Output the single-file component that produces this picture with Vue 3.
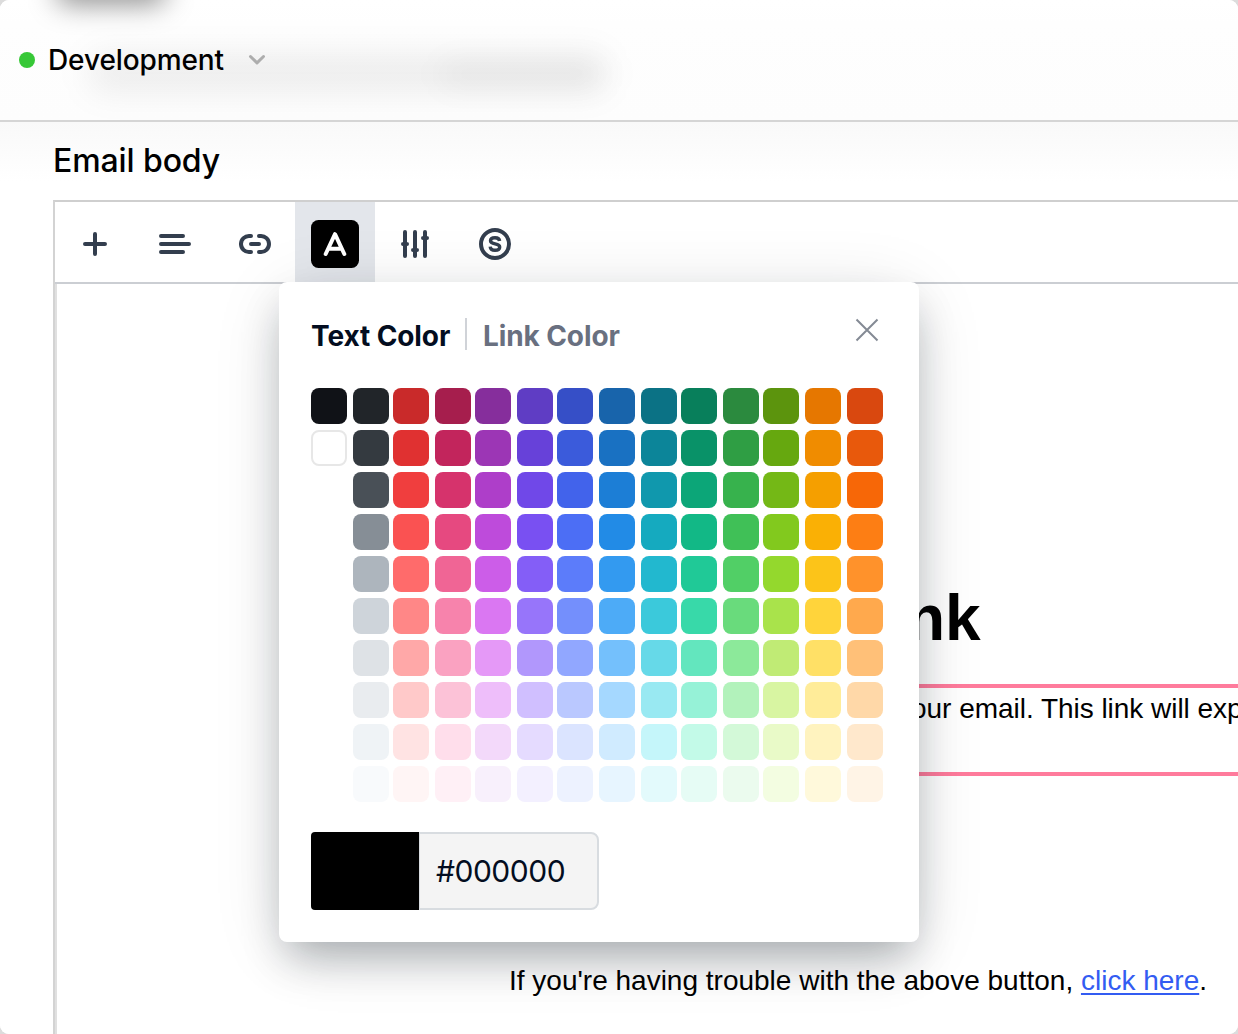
<script setup>
import { ref } from 'vue'

const palette = [
  ['#101217', '#ffffff'],
  ['#212529', '#343a40', '#495057', '#868e96', '#adb5bd', '#ced4da', '#dee2e6', '#e9ecef', '#eff3f6', '#f8fafc'],
  ['#c92a2a', '#e03131', '#f03e3e', '#fa5252', '#ff6b6b', '#ff8787', '#ffa8a8', '#ffc9c9', '#ffe3e3', '#fff5f5'],
  ['#a61e4d', '#c2255c', '#d6336c', '#e64980', '#f06595', '#f783ac', '#faa2c1', '#fcc2d7', '#ffdeeb', '#fff0f6'],
  ['#862e9c', '#9c36b5', '#ae3ec9', '#be4bdb', '#cc5de8', '#da77f2', '#e599f7', '#eebefa', '#f3d9fa', '#f8f0fc'],
  ['#5f3dc4', '#6741d9', '#7048e8', '#7950f2', '#845ef7', '#9775fa', '#b197fc', '#d0bfff', '#e5dbff', '#f3f0ff'],
  ['#364fc7', '#3b5bdb', '#4263eb', '#4c6ef5', '#5c7cfa', '#748ffc', '#91a7ff', '#bac8ff', '#dbe4ff', '#edf2ff'],
  ['#1864ab', '#1971c2', '#1c7ed6', '#228be6', '#339af0', '#4dabf7', '#74c0fc', '#a5d8ff', '#d0ebff', '#e7f5ff'],
  ['#0b7285', '#0c8599', '#1098ad', '#15aabf', '#22b8cf', '#3bc9db', '#66d9e8', '#99e9f2', '#c5f6fa', '#e3fafc'],
  ['#087f5b', '#099268', '#0ca678', '#12b886', '#20c997', '#38d9a9', '#63e6be', '#96f2d7', '#c3fae8', '#e6fcf5'],
  ['#2b8a3e', '#2f9e44', '#37b24d', '#40c057', '#51cf66', '#69db7c', '#8ce99a', '#b2f2bb', '#d3f9d8', '#ebfbee'],
  ['#5c940d', '#66a80f', '#74b816', '#82c91e', '#94d82d', '#a9e34b', '#c0eb75', '#d8f5a2', '#e9fac8', '#f3fde1'],
  ['#e67700', '#f08c00', '#f59f00', '#fab005', '#fcc419', '#ffd43b', '#ffe066', '#ffec99', '#fff3bf', '#fff9db'],
  ['#d9480f', '#e8590c', '#f76707', '#fd7e14', '#ff922b', '#ffa94d', '#ffc078', '#ffd8a8', '#ffe8cc', '#fff4e6'],
]
const selected = ref('#000000')
</script>

<template>
  <div class="backdrop">
    <div class="page">
      <header class="topbar">
        <span class="haze haze-title"></span>
        <span class="haze haze-line"></span>
        <span class="haze haze-line-end"></span>
        <span class="dot"></span>
        <span class="env">Development</span>
        <svg class="chevron" width="18" height="12" viewBox="0 0 18 12"><path d="M2.500 2.500 9 8.800 15.500 2.500" /></svg>
      </header>

      <main class="content">
        <h2 class="label">Email body</h2>
        <section class="editor">
          <div class="toolbar">
            <button class="tool">
              <svg viewBox="0 0 80 80"><path d="M40 32v20M30 42h20" /></svg>
            </button>
            <button class="tool">
              <svg viewBox="0 0 80 80"><path d="M26 34h22M26 42h28M26 50h22" /></svg>
            </button>
            <button class="tool">
              <svg viewBox="0 0 80 80"><path d="M36 34H34.500a8 8 0 0 0-8.500 8 8 8 0 0 0 8.500 8H36M44 34h1.500a8 8 0 0 1 8.500 8 8 8 0 0 1-8.500 8H44M36 42h8" /></svg>
            </button>
            <button class="tool active">
              <svg viewBox="0 0 80 80">
                <rect x="16" y="18" width="48" height="48" rx="7.500" />
                <path class="letter" d="M30.700 52 40 32.200 49.300 52M34 46.800h12" />
              </svg>
            </button>
            <button class="tool">
              <svg viewBox="0 0 80 80"><path d="M30 30v24M40 30v24M50 30v24M28 42h4M38 48h4M48 36h4" /></svg>
            </button>
            <button class="tool">
              <svg viewBox="0 0 80 80">
                <circle cx="40" cy="42" r="14" />
                <path class="ess" d="M44.600 39C44.400 36.600 42.600 35.700 40 35.700c-2.600 0-4.500 1.100-4.500 3.100 0 4.500 9.200 1.800 9.200 6.200 0 2-1.900 3.300-4.700 3.300S35.400 47 35.200 44.600" />
              </svg>
            </button>
          </div>

          <div class="mail">
            <h1 class="title">nk</h1>
            <p class="block">our email. This link will exp</p>
            <p class="help">If you're having trouble with the above button, <a>click here</a>.</p>
          </div>
        </section>
      </main>

      <div class="popover">
        <div class="tabs">
          <span class="tab current">Text Color</span>
          <span class="divider"></span>
          <span class="tab">Link Color</span>
          <svg class="close" width="24" height="24" viewBox="0 0 24 24"><path d="M1.500 1.500l21 21M22.500 1.500l-21 21" /></svg>
        </div>
        <div class="swatches">
          <div v-for="(column, i) in palette" :key="i" class="column">
            <span
              v-for="color in column"
              :key="color"
              class="swatch"
              :class="{ white: color === '#ffffff' }"
              :style="{ background: color }"
            ></span>
          </div>
        </div>
        <div class="value">
          <span class="preview" :style="{ background: selected }"></span>
          <span class="hex"><span>{{ selected }}</span></span>
        </div>
      </div>
    </div>
  </div>
</template>

<style>
body {
  margin: 0;
}
</style>

<style scoped>
.backdrop {
  width: 1238px;
  height: 1034px;
  background: #dcdcdc;
  overflow: hidden;
}
.page {
  position: relative;
  width: 1238px;
  height: 1034px;
  border-radius: 9px;
  background: #fff;
  overflow: hidden;
  font-family: Inter, 'Liberation Sans', sans-serif;
  color: #000;
}
.topbar {
  position: relative;
  box-sizing: border-box;
  height: 122px;
  padding-left: 19px;
  display: flex;
  align-items: center;
  border-bottom: 2px solid #d5d5d5;
  background: linear-gradient(#fff, #fefefe 20%, #fdfdfd);
  overflow: hidden;
}
.haze {
  position: absolute;
  border-radius: 12px;
}
.haze-title {
  left: 56px;
  top: -28px;
  width: 110px;
  height: 32px;
  background: rgba(0, 0, 0, 0.45);
  filter: blur(14px);
}
.haze-line {
  left: 90px;
  top: 55px;
  width: 515px;
  height: 36px;
  background: rgba(0, 0, 0, 0.07);
  filter: blur(16px);
}
.haze-line-end {
  left: 440px;
  top: 59px;
  width: 165px;
  height: 30px;
  background: rgba(0, 0, 0, 0.03);
  filter: blur(14px);
}
.dot {
  position: relative;
  width: 16px;
  height: 16px;
  border-radius: 50%;
  background: #37c837;
}
.env {
  position: relative;
  width: 177px;
  margin-left: 13px;
  font-size: 28px;
  font-weight: 500;
  line-height: 36px;
  letter-spacing: -0.1px;
  white-space: nowrap;
}
.chevron {
  position: relative;
  margin-left: 23px;
}
.chevron path {
  fill: none;
  stroke: #adadad;
  stroke-width: 3;
  stroke-linecap: round;
  stroke-linejoin: round;
}
.content {
  height: 912px;
  padding-left: 53px;
  background: linear-gradient(#f9f9f9, #fff 60px);
}
.label {
  margin: 0;
  padding-top: 19px;
  height: 59px;
  font-size: 32px;
  font-weight: 500;
  line-height: 40px;
  letter-spacing: -0.1px;
}
.editor {
  height: 840px;
  border-top: 2px solid #cfcfcf;
  border-left: 2px solid #d3d3d3;
}
.toolbar {
  display: flex;
  height: 80px;
  border-bottom: 2px solid #cbced3;
}
.tool {
  width: 80px;
  height: 80px;
  padding: 0;
  border: 0;
  background: transparent;
}
.tool.active {
  background: #e3e6eb;
}
.tool svg {
  display: block;
  width: 80px;
  height: 80px;
  fill: none;
  stroke: #333e4e;
  stroke-width: 4;
  stroke-linecap: round;
  stroke-linejoin: round;
}
.tool rect {
  fill: #000;
  stroke: none;
}
.tool .letter {
  stroke: #fff;
}
.tool .ess {
  stroke-width: 3.400;
  stroke-linecap: butt;
}
.mail {
  height: 760px;
  border-left: 2px solid #e0e0e0;
  font-family: 'Liberation Sans', Arial, sans-serif;
}
.title {
  margin: 0;
  padding: 298px 0 0 849px;
  height: 102px;
  font-size: 64px;
  line-height: 72px;
}
.block {
  box-sizing: border-box;
  height: 92px;
  margin: 0 0 0 452px;
  padding: 5px 0 0 402px;
  border-top: 4px solid #ff7b9c;
  border-bottom: 4px solid #ff7b9c;
  font-size: 28px;
  line-height: 32px;
  letter-spacing: -0.03px;
  white-space: nowrap;
}
.help {
  margin: 0;
  padding: 189px 0 0 452px;
  font-size: 28px;
  line-height: 32px;
  white-space: nowrap;
}
.help a {
  color: #335cf2;
  text-decoration: underline;
  text-decoration-thickness: 2px;
  text-underline-offset: 3px;
}
.popover {
  position: absolute;
  left: 279px;
  top: 282px;
  box-sizing: border-box;
  width: 640px;
  height: 660px;
  padding: 32px;
  border-radius: 8px;
  background: #fff;
  box-shadow:
    0 22px 40px -8px rgba(14, 22, 32, 0.3),
    0 10px 70px -10px rgba(14, 22, 32, 0.16);
}
.tabs {
  display: flex;
  align-items: center;
  height: 40px;
  font-size: 28px;
  font-weight: 700;
  letter-spacing: -0.1px;
  color: #697080;
}
.tab {
  line-height: 40px;
  padding-top: 4px;
  white-space: nowrap;
}
.tab.current {
  width: 140px;
  color: #030d20;
}
.divider {
  width: 2px;
  height: 32px;
  margin: 0 16px 0 14px;
  background: #d0d3d8;
}
.close {
  margin: -8px 8px 0 auto;
}
.close path {
  fill: none;
  stroke: #848a94;
  stroke-width: 2;
}
.swatches {
  display: grid;
  grid-template-columns: 42px 40px 42px 40px 42px 40px 42px 42px 40px 42px 40px 42px 42px 36px;
  margin-top: 34px;
  height: 444px;
}
.column {
  display: flex;
  flex-direction: column;
  gap: 6px;
}
.swatch {
  box-sizing: border-box;
  width: 36px;
  height: 36px;
  border-radius: 8px;
}
.swatch.white {
  border: 2px solid #e7e7e7;
}
.value {
  display: flex;
  height: 78px;
}
.preview {
  width: 108px;
  border-radius: 4px 0 0 4px;
}
.hex {
  box-sizing: border-box;
  width: 180px;
  padding-left: 16px;
  display: flex;
  align-items: center;
  border: 2px solid #d8dce0;
  border-left-width: 1px;
  border-radius: 0 8px 8px 0;
  background: #f4f4f4;
  font-size: 30px;
  font-weight: 400;
  letter-spacing: -0.5px;
  color: #030d20;
}
</style>
